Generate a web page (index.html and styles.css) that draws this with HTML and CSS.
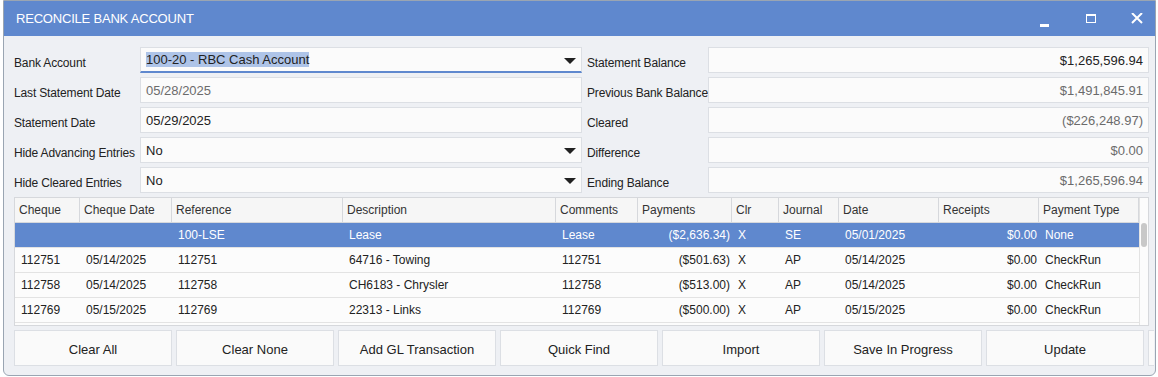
FILE: index.html
```html
<!DOCTYPE html>
<html lang="en">
<head>
    <meta charset="UTF-8">
    <title>Reconcile Bank Account</title>
    <link rel="stylesheet" href="styles.css">
</head>
<body>
    <div class="window">
        <div class="titlebar">
            <span class="title">RECONCILE BANK ACCOUNT</span>
            <div class="controls">
                <svg width="16" height="16" viewBox="0 0 16 16"><rect x="3" y="11" width="9" height="3" fill="#fff"/></svg>
                <svg width="16" height="16" viewBox="0 0 16 16"><rect x="3.5" y="1.5" width="9" height="8" fill="none" stroke="#fff"/><rect x="3" y="1" width="10" height="2" fill="#fff"/></svg>
                <svg width="16" height="16" viewBox="0 0 16 16"><path d="M3 0L13 10M13 0L3 10" stroke="#fff" stroke-width="2"/></svg>
            </div>
        </div>
        <div class="content">
            <div class="form">
                <label>Bank Account</label>
                <div class="field active"><span class="sel">100-20 - RBC Cash Account</span><span class="arrow"></span></div>
                <label class="rlabel">Statement Balance</label>
                <div class="field num">$1,265,596.94</div>

                <label>Last Statement Date</label>
                <div class="field muted">05/28/2025</div>
                <label class="rlabel">Previous Bank Balance</label>
                <div class="field num muted">$1,491,845.91</div>

                <label>Statement Date</label>
                <div class="field">05/29/2025</div>
                <label class="rlabel">Cleared</label>
                <div class="field num muted">($226,248.97)</div>

                <label>Hide Advancing Entries</label>
                <div class="field">No<span class="arrow"></span></div>
                <label class="rlabel">Difference</label>
                <div class="field num muted">$0.00</div>

                <label>Hide Cleared Entries</label>
                <div class="field">No<span class="arrow"></span></div>
                <label class="rlabel">Ending Balance</label>
                <div class="field num muted">$1,265,596.94</div>
            </div>

            <div class="grid">
                <div class="rows">
                    <div class="row head">
                        <div>Cheque</div><div>Cheque Date</div><div>Reference</div><div>Description</div><div>Comments</div><div>Payments</div><div>Clr</div><div>Journal</div><div>Date</div><div>Receipts</div><div>Payment Type</div>
                    </div>
                    <div class="row selected">
                        <div></div><div></div><div>100-LSE</div><div>Lease</div><div>Lease</div><div class="r">($2,636.34)</div><div>X</div><div>SE</div><div>05/01/2025</div><div class="r">$0.00</div><div>None</div>
                    </div>
                    <div class="row">
                        <div>112751</div><div>05/14/2025</div><div>112751</div><div>64716 - Towing</div><div>112751</div><div class="r">($501.63)</div><div>X</div><div>AP</div><div>05/14/2025</div><div class="r">$0.00</div><div>CheckRun</div>
                    </div>
                    <div class="row">
                        <div>112758</div><div>05/14/2025</div><div>112758</div><div>CH6183 - Chrysler</div><div>112758</div><div class="r">($513.00)</div><div>X</div><div>AP</div><div>05/14/2025</div><div class="r">$0.00</div><div>CheckRun</div>
                    </div>
                    <div class="row">
                        <div>112769</div><div>05/15/2025</div><div>112769</div><div>22313 - Links</div><div>112769</div><div class="r">($500.00)</div><div>X</div><div>AP</div><div>05/15/2025</div><div class="r">$0.00</div><div>CheckRun</div>
                    </div>
                </div>
                <div class="scrollbar"><div class="thumb"></div></div>
            </div>

            <div class="buttons">
                <button>Clear All</button>
                <button>Clear None</button>
                <button>Add GL Transaction</button>
                <button>Quick Find</button>
                <button>Import</button>
                <button>Save In Progress</button>
                <button>Update</button>
                <button></button>
            </div>
        </div>
    </div>
</body>
</html>
```

FILE: styles.css
```css
body {
    margin: 0;
    background: #fff;
    font-family: 'Liberation Sans', Arial, sans-serif;
    color: #222;
}
.window {
    margin-left: 3px;
    width: 1151px;
    height: 374px;
    border: 1px solid #9aa5b2;
    border-radius: 0 0 6px 6px;
    background: #eef0f4;
    overflow: hidden;
}
.titlebar {
    height: 35px;
    background: #5f88ce;
    display: flex;
    align-items: center;
    justify-content: space-between;
    padding: 0 10px 0 12px;
}
.title {
    color: #fff;
    font-size: 13px;
    letter-spacing: -0.2px;
}
.controls {
    display: flex;
    gap: 30px;
    margin-top: 4px;
}
.content {
    padding: 11px 6px 0 10px;
}
.form {
    display: grid;
    grid-template-columns: 126px 442px 126px 441px;
    grid-auto-rows: 26px;
    row-gap: 4px;
}
label {
    font-size: 12px;
    letter-spacing: -0.15px;
    display: flex;
    align-items: center;
    padding-top: 5px;
    white-space: nowrap;
}
.rlabel {
    padding-left: 5px;
}
.field {
    background: #fbfbfb;
    border: 1px solid #dcdfe4;
    font-size: 13px;
    display: flex;
    align-items: center;
    padding: 1px 5px 0;
    position: relative;
}
.field.active {
    border-bottom: 2px solid #5f88ce;
    padding-top: 0;
}
.sel {
    background: #aec4e8;
    line-height: 15px;
}
.num {
    justify-content: flex-end;
}
.muted {
    color: #6b6b6b;
}
.arrow {
    position: absolute;
    right: 5px;
    top: 10px;
    border-left: 6px solid transparent;
    border-right: 6px solid transparent;
    border-top: 6px solid #222;
}
.grid {
    margin-top: 4px;
    height: 127px;
    border: 1px solid #d6d8dc;
    background: #fcfcfc;
    display: flex;
}
.rows {
    width: 1124px;
}
.row {
    display: grid;
    grid-template-columns: 65px 92px 171px 213px 82px 94px 47px 60px 100px 100px 100px;
    height: 24px;
    border-bottom: 1px solid #e3e3e3;
    font-size: 12px;
    align-items: center;
}
.row > div {
    padding: 0 6px;
    white-space: nowrap;
    overflow: hidden;
}
.row .r {
    text-align: right;
    padding-right: 2px;
}
.row.head {
    background: #f6f6f6;
    border-bottom: 1px solid #d6d8dc;
    color: #333;
}
.row.head > div {
    border-right: 1px solid #d6d8dc;
    height: 24px;
    line-height: 24px;
    padding: 0 4px;
}
.row.selected {
    background: #5f88ce;
    color: #fff;
}
.scrollbar {
    width: 11px;
    border-left: 1px solid #e3e3e3;
    padding-top: 25px;
    background: #fcfcfc;
}
.thumb {
    width: 6px;
    height: 24px;
    margin: 0 auto;
    background: #c8c8c8;
    border-radius: 3px;
}
.buttons {
    margin-top: 4px;
    display: flex;
    gap: 4px;
    width: 1140px;
    overflow: hidden;
}
button {
    flex: 0 0 158px;
    height: 36px;
    padding-top: 4px;
    background: #fafafa;
    border: 1px solid #dcdfe4;
    font-family: 'Liberation Sans', Arial, sans-serif;
    font-size: 13px;
    color: #222;
}
```
